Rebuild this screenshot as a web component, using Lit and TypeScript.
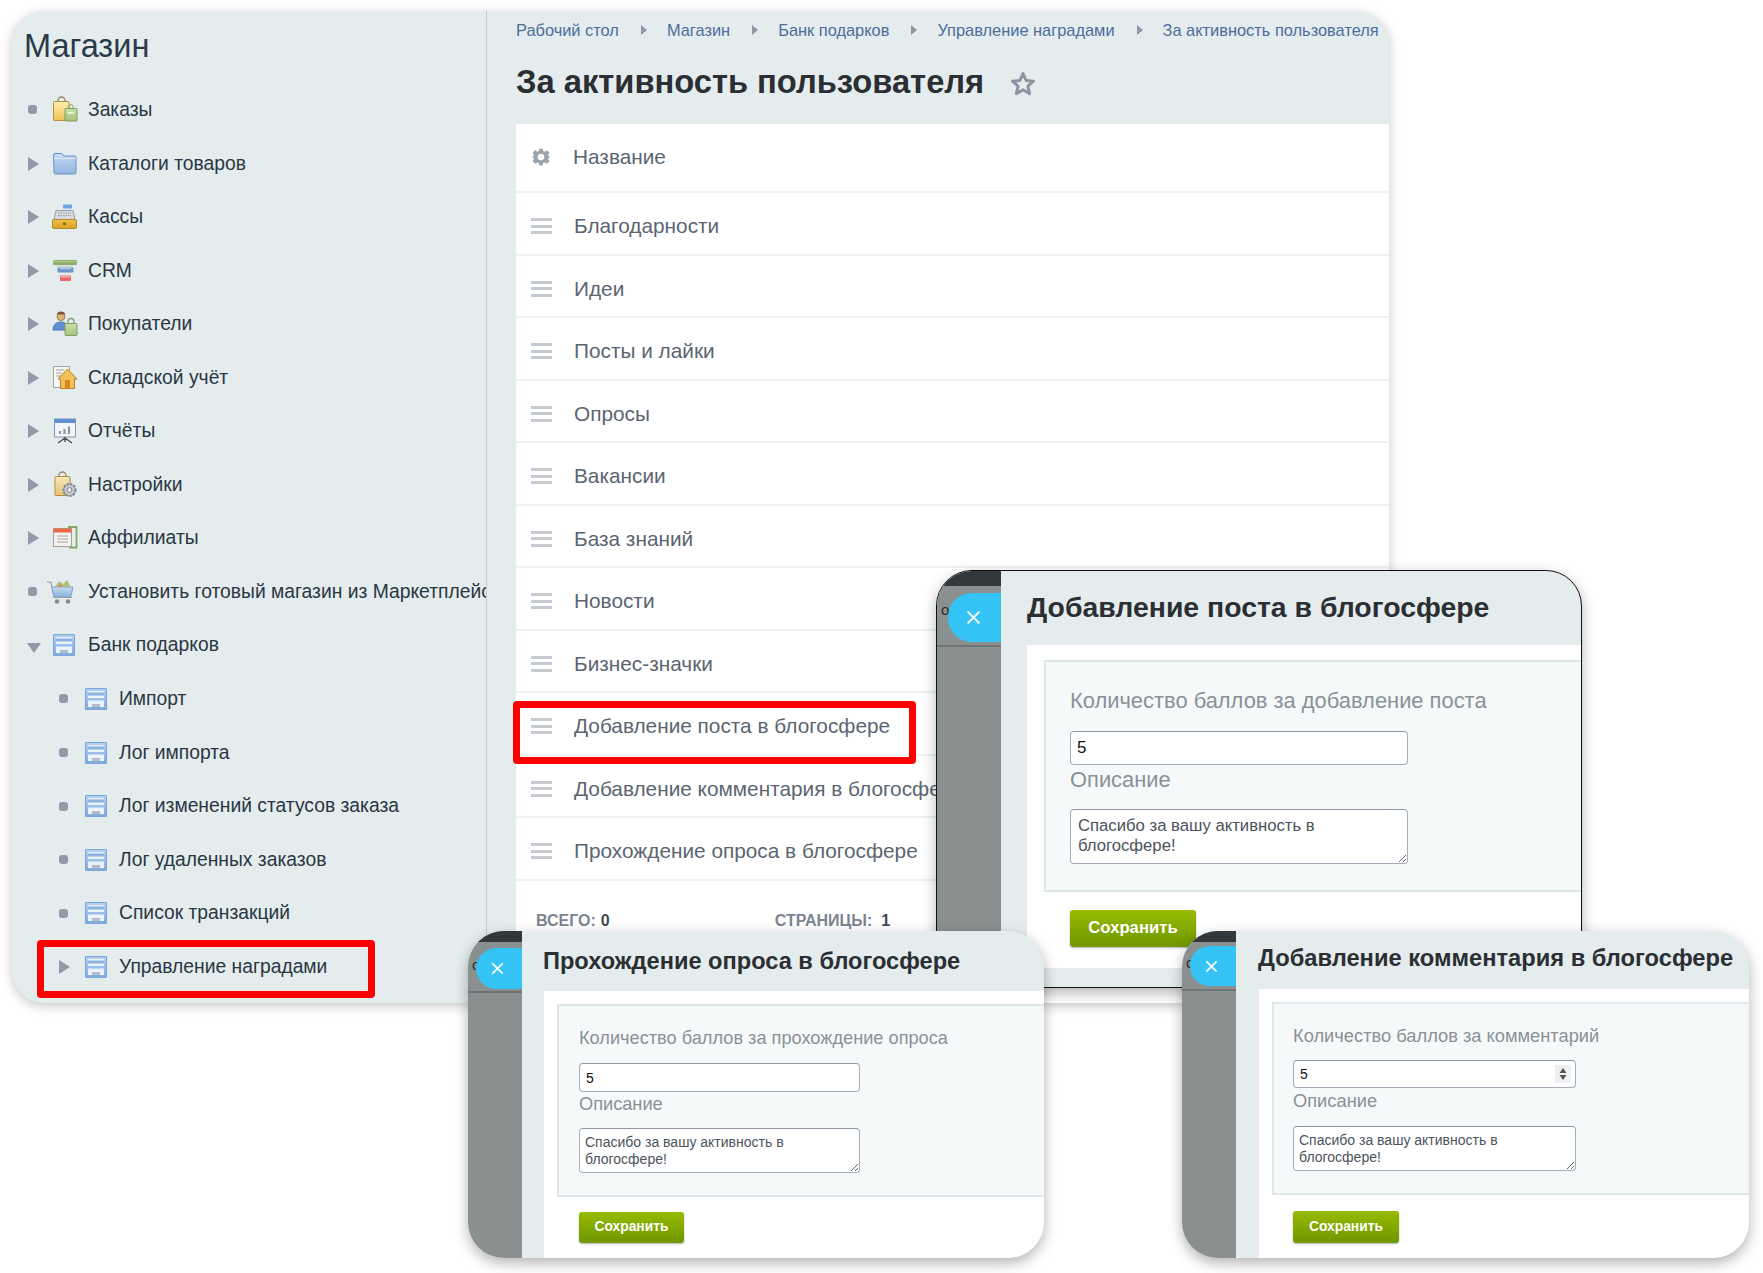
import { LitElement, html, css } from "lit";
import { customElement } from "lit/decorators.js";

const icons: Record<string, any> = {
  orders: html`<svg class="ico" viewBox="0 0 26 26"><path d="M6 5V3.500a3.500 3.500 0 0 1 7 0V5" fill="none" stroke="#9a8a6a" stroke-width="1.300"/><rect x="1.500" y="4.500" width="15.500" height="19" rx="1" fill="url(#gy)" stroke="#b58d3c"/><rect x="13" y="11.500" width="12" height="12.500" rx="1" fill="url(#gg)" stroke="#7f9c5a"/><rect x="16" y="15" width="6" height="1.600" fill="#f3f7e6"/><path d="M17 11V9.500a2 2 0 0 1 4 0V11" fill="none" stroke="#8da66c"/></svg>`,
  folder: html`<svg class="ico" viewBox="0 0 26 26"><path d="M1.500 4a1.500 1.500 0 0 1 1.500-1.500h7l2 2.500h10.500a1.500 1.500 0 0 1 1.500 1.500v15a1.500 1.500 0 0 1-1.500 1.500h-19a1.500 1.500 0 0 1-1.500-1.500z" fill="url(#gb)" stroke="#6c90c4"/><path d="M2 7.500h21.500" stroke="#dce9f7" stroke-width="1.200"/></svg>`,
  cash: html`<svg class="ico" viewBox="0 0 26 26"><rect x="11" y="0.500" width="9" height="4" rx="1" fill="#6aa6e0"/><path d="M4 6.500h17l2 9.500H2z" fill="#d9dcdf" stroke="#9a9ea3"/><path d="M6 9h13M6 11.500h13" stroke="#9ba0a6" stroke-dasharray="1.500 1"/><rect x="0.500" y="15.500" width="24" height="9" rx="1.500" fill="url(#gd)" stroke="#b08a2c"/><rect x="11" y="18.500" width="3" height="2.500" fill="#8a6a1c"/></svg>`,
  crm: html`<svg class="ico" viewBox="0 0 26 26"><rect x="1" y="2" width="24" height="5" rx="1" fill="#8fae6a"/><path d="M1 3.500h24" stroke="#adc78c"/><rect x="5.500" y="9.500" width="16" height="5" rx="1" fill="#6f94cc"/><rect x="8" y="10" width="11" height="1.500" fill="#a6c2e6"/><rect x="8" y="17.500" width="11" height="5.500" rx="1" fill="#e76a6e"/><rect x="9" y="18" width="9" height="1.500" fill="#f4a5a5"/><path d="M4 7.500h18l-2 2H6z" fill="#cfd5d8"/></svg>`,
  buyers: html`<svg class="ico" viewBox="0 0 26 26"><circle cx="9" cy="5.500" r="4" fill="#e0b37c" stroke="#9c7a4f"/><path d="M5 3.500a4 3 0 0 1 8 0z" fill="#7a5a38"/><path d="M1 19c0-5 3-8 8-8s6 3 6 8z" fill="#5f8fd0" stroke="#4c76b3"/><rect x="13" y="12.500" width="12" height="12" rx="1" fill="url(#gg)" stroke="#7f9c5a"/><path d="M16 12.500V10.500a3 3 0 0 1 6 0v2" fill="none" stroke="#8a9a76" stroke-width="1.300"/></svg>`,
  stock: html`<svg class="ico" viewBox="0 0 26 26"><rect x="1.500" y="1.500" width="16" height="21" fill="#f6f6f2" stroke="#a5a5a0"/><path d="M4 5h8M4 8h6M4 11h5" stroke="#a0a0a0"/><path d="M6 14L15.500 4 25 14h-2.500v9.500h-14V14z" fill="#f2c05a" stroke="#b9801f"/><rect x="13" y="15" width="5" height="8.500" fill="#d8861c"/></svg>`,
  report: html`<svg class="ico" viewBox="0 0 26 26"><rect x="2.500" y="1" width="21" height="18" fill="#f3f5f8" stroke="#7e98be"/><rect x="2.500" y="1" width="21" height="4" fill="#5f8ed2"/><path d="M8 16v-3M12.500 16v-5M17 16V8.500" stroke="#8e9aa6" stroke-width="2.200"/><path d="M13 19v5M13 20L6 25M13 20l7 5" stroke="#4a4f55" stroke-width="1.400" fill="none"/></svg>`,
  settings: html`<svg class="ico" viewBox="0 0 26 26"><path d="M7 5V3.500a3.500 3.500 0 0 1 7 0V5" fill="none" stroke="#9a8a6a" stroke-width="1.300"/><rect x="3" y="4.500" width="15" height="19" rx="1" fill="url(#gt)" stroke="#b58d3c"/><circle cx="17.500" cy="18" r="6" fill="#c5c9cc" stroke="#80868b" stroke-width="2" stroke-dasharray="2.500 1"/><circle cx="17.500" cy="18" r="2.400" fill="#eef0f1" stroke="#80868b"/></svg>`,
  affil: html`<svg class="ico" viewBox="0 0 26 26"><path d="M16 2h8.500v20.500H17" fill="none" stroke="#86a860" stroke-width="1.800"/><rect x="1.500" y="3.500" width="18" height="18" fill="#f3f2ee" stroke="#a2a29c"/><rect x="1.500" y="3.500" width="18" height="4" fill="#e66a44"/><path d="M5 11h11M5 14h11M5 17h11" stroke="#a5a5a5" stroke-width="1.200"/></svg>`,
  market: html`<svg class="ico" viewBox="0 0 26 26"><path d="M-5 2.500l4 1 3 15h18" fill="none" stroke="#9a9fa4" stroke-width="1.200"/><path d="M0 8h21l-2 9.500H2z" fill="url(#gb)" stroke="#82a8d4"/><path d="M3 8l4-6 4 3 4-4 4 7z" fill="#a8c67f"/><path d="M5 8l3-3 3 3z" fill="#e88767"/><circle cx="5" cy="22.500" r="2.300" fill="#888d91"/><circle cx="16" cy="22.500" r="2.300" fill="#888d91"/></svg>`,
  form: html`<svg class="ico" viewBox="0 0 26 26"><rect x="1.500" y="2.500" width="21" height="21" rx=".5" fill="url(#gf)" stroke="#7ba3d6"/><rect x="4" y="5" width="16" height="16" fill="#e9f2fb"/><rect x="4" y="6.500" width="16" height="3" fill="#8ab2e2"/><rect x="4" y="12" width="16" height="2.500" fill="#9cc0e8"/><rect x="8" y="18" width="8" height="3" fill="#b3bcc6"/></svg>`,
};

const nav = [
  { t: "Заказы", i: "orders", m: "dot" },
  { t: "Каталоги товаров", i: "folder", m: "right" },
  { t: "Кассы", i: "cash", m: "right" },
  { t: "CRM", i: "crm", m: "right" },
  { t: "Покупатели", i: "buyers", m: "right" },
  { t: "Складской учёт", i: "stock", m: "right" },
  { t: "Отчёты", i: "report", m: "right" },
  { t: "Настройки", i: "settings", m: "right" },
  { t: "Аффилиаты", i: "affil", m: "right" },
  { t: "Установить готовый магазин из Маркетплейса", i: "market", m: "dot" },
  { t: "Банк подарков", i: "form", m: "down" },
  { t: "Импорт", i: "form", m: "dot", sub: true },
  { t: "Лог импорта", i: "form", m: "dot", sub: true },
  { t: "Лог изменений статусов заказа", i: "form", m: "dot", sub: true },
  { t: "Лог удаленных заказов", i: "form", m: "dot", sub: true },
  { t: "Список транзакций", i: "form", m: "dot", sub: true },
  { t: "Управление наградами", i: "form", m: "right", sub: true },
];

const rows = [
  "Благодарности", "Идеи", "Посты и лайки", "Опросы", "Вакансии", "База знаний", "Новости", "Бизнес-значки",
  "Добавление поста в блогосфере", "Добавление комментария в блогосфере", "Прохождение опроса в блогосфере",
];

const crumbs = ["Рабочий стол", "Магазин", "Банк подарков", "Управление наградами", "За активность пользователя"];

const modals = [
  { cls: "m1", title: "Добавление поста в блогосфере", label: "Количество баллов за добавление поста", spin: false },
  { cls: "m2", title: "Прохождение опроса в блогосфере", label: "Количество баллов за прохождение опроса", spin: false },
  { cls: "m3", title: "Добавление комментария в блогосфере", label: "Количество баллов за комментарий", spin: true },
];

@customElement("app-root")
export class AppRoot extends LitElement {
  static styles = css`
    :host { display: block; position: relative; width: 1763px; height: 1273px; background: #fff; overflow: hidden; font-family: "Liberation Sans", Arial, sans-serif; }
    .defs { display: block; width: 0; height: 0; }

    .win { position: absolute; left: 12px; top: 11px; width: 1377px; height: 992px; display: flex; background: #e4ecee; border-radius: 32px; overflow: hidden; box-shadow: 0 3px 12px rgba(0,0,0,.22); }
    .side { width: 474px; flex: none; border-right: 1px solid #b9cbdc; overflow: hidden; }
    .side h1 { margin: 0; height: 72.2px; line-height: 70px; padding-left: 12px; font-size: 32.500px; font-weight: 400; color: #2b3a48; }
    .nav { display: grid; grid-auto-rows: 53.550px; }
    .item { display: flex; align-items: center; padding-left: 16px; white-space: nowrap; font-size: 19.300px; color: #2a3743; position: relative; }
    .item.sub { padding-left: 47px; }
    .mark { width: 24px; flex: none; display: flex; align-items: center; }
    .sub .mark { width: 25px; }
    .dot { width: 9px; height: 9px; border-radius: 3px; background: #8f9ba8; }
    .right { width: 0; height: 0; border-left: 11px solid #8f9ba8; border-top: 7px solid transparent; border-bottom: 7px solid transparent; }
    .down { width: 0; height: 0; margin: 6px 0 0 -1px; border-top: 10px solid #8f9ba8; border-left: 7px solid transparent; border-right: 7px solid transparent; }
    .ico { width: 26px; height: 26px; flex: none; overflow: visible; }
    .item > span.label { margin-left: 10px; }
    .sub > span.label { margin-left: 9px; }

    .main { flex: 1; min-width: 0; padding-left: 29px; display: flex; flex-direction: column; }
    .crumbs { height: 38px; display: flex; align-items: center; white-space: nowrap; font-size: 16.400px; color: #4d6d9a; }
    .chev { width: 0; height: 0; margin: 0 20px 0 22px; border-left: 6px solid #8b97a3; border-top: 5px solid transparent; border-bottom: 5px solid transparent; }
    .ttl { height: 75px; padding-bottom: 9px; box-sizing: border-box; display: flex; align-items: center; }
    .ttl h2 { margin: 0; font-size: 32.700px; font-weight: 700; color: #2b2f33; white-space: nowrap; }
    .star { width: 26px; height: 26px; margin: 4px 0 0 26px; }
    .list { background: #fff; flex: 1; }
    .hrow { height: 67px; box-sizing: content-box; display: flex; align-items: flex-start; line-height: 65px; font-size: 20.800px; color: #5b6572; border-bottom: 2px solid #eef2f4; }
    .gear { width: 22px; height: 22px; margin: 22px 21px 0 14px; }
    .row { height: 62.5px; box-sizing: border-box; padding-top: 6px; display: flex; align-items: center; font-size: 20.800px; color: #5b6572; border-bottom: 2px solid #eef2f4; white-space: nowrap; }
    .ham { width: 21px; height: 16px; margin: 0 22px 0 15px; flex: none; display: flex; flex-direction: column; justify-content: space-between; }
    .ham i { display: block; height: 3px; background: #c6cad1; }
    .foot { display: flex; padding: 31px 0 0 20px; font-size: 16px; font-weight: 700; color: #7b8592; }
    .foot b { color: #3f4a56; margin-left: 5px; }
    .foot .pg { margin-left: 165px; }
    .foot .pg b { margin-left: 9px; }

    .red { position: absolute; border: 7px solid #fe0000; border-radius: 4px; box-sizing: border-box; }
    .r1 { left: 37px; top: 940px; width: 338px; height: 58px; }
    .r2 { left: 513px; top: 701px; width: 403px; height: 63px; }

    .modal { position: absolute; display: flex; overflow: hidden; background: #e4ecee; box-sizing: border-box; box-shadow: 0 5px 14px rgba(0,0,0,.3); }
    .m1 { left: 936px; top: 570px; width: 646px; height: 418px; border-radius: 36px; border: 1px solid #111;
      --strip: 64px; --dark: 15px; --line: 74px; --cl: 11px; --ct: 22px; --cw: 53px; --ch: 49px; --x: 17px; --hh: 74px; --hb: 2px; --tp: 26px; --tf: 28.400px;
      --wm: 26px; --wb: 19px; --wt: 15px; --wp: 17px; --ip: 26px; --ft: 23px; --lf: 21.900px; --ll: 32px; --gi: 14px; --iw: 338px; --ih: 34px; --ol: 30px; --gt: 14px; --th: 55px; --fh: 232px; --bt: 18px; --bw: 126px; --bh: 37px; --bf: 16.700px; --vf: 17px; --tpf: 16.700px; --tlh: 19.500px; --tpt: 6px; --tpl: 7px; }
    .m2 { left: 468px; top: 931px; width: 576px; height: 327px; border-radius: 36px;
      --strip: 54px; --dark: 11px; --line: 60px; --cl: 8px; --ct: 17px; --cw: 46px; --ch: 41px; --x: 15px; --hh: 60px; --hb: 0px; --tp: 21px; --tf: 23.600px;
      --wm: 22px; --wb: 0px; --wt: 13px; --wp: 13px; --ip: 22px; --ft: 18px; --lf: 18.200px; --ll: 28px; --gi: 11px; --iw: 281px; --ih: 29px; --ol: 24px; --gt: 12px; --th: 45px; --fh: 193px; --bt: 15px; --bw: 105px; --bh: 31px; --bf: 13.800px; --vf: 14px; --tpf: 14px; --tlh: 16.500px; --tpt: 5px; --tpl: 5px; }
    .m3 { left: 1182px; top: 931px; width: 567px; height: 327px; border-radius: 36px;
      --strip: 54px; --dark: 11px; --line: 58px; --cl: 8px; --ct: 15px; --cw: 46px; --ch: 40px; --x: 15px; --hh: 58px; --hb: 4px; --tp: 22px; --tf: 23.700px;
      --wm: 23px; --wb: 0px; --wt: 13px; --wp: 13px; --ip: 21px; --ft: 18px; --lf: 18.300px; --ll: 28px; --gi: 10px; --iw: 283px; --ih: 28px; --ol: 25px; --gt: 13px; --th: 45px; --fh: 193px; --bt: 16px; --bw: 106px; --bh: 32px; --bf: 13.800px; --vf: 14px; --tpf: 14px; --tlh: 16.500px; --tpt: 5px; --tpl: 5px; }
    .strip { width: var(--strip); flex: none; position: relative; background: #8a8f8f; }
    .strip .top { height: var(--dark); background: #33383d; }
    .strip .ln { position: absolute; left: 0; right: 0; top: var(--line); height: 2px; background: #6f7474; }
    .strip .oo { position: absolute; left: 4px; top: calc(var(--ct) + 8px); font-size: 15px; color: #2c3034; }
    .close { position: absolute; left: var(--cl); top: var(--ct); width: var(--cw); height: var(--ch); background: #33c4f5; border-radius: 24px 0 0 24px; display: flex; align-items: center; justify-content: center; padding-right: 3px; box-sizing: border-box; }
    .close svg { width: var(--x); height: var(--x); }
    .pane { flex: 1; min-width: 0; display: flex; flex-direction: column; }
    .head { height: var(--hh); padding: 0 0 var(--hb) var(--tp); flex: none; display: flex; align-items: center; box-sizing: border-box; }
    .head h3 { margin: 0; font-size: var(--tf); font-weight: 700; color: #2b2f33; white-space: nowrap; }
    .white { flex: 1; margin: 0 0 var(--wb) var(--wm); padding: var(--wt) 0 0 var(--wp); background: #fff; }
    .fs { height: var(--fh); box-sizing: border-box; background: #f5f9fa; border: 2px solid #e0e7ea; border-right: none; padding: var(--ft) 0 0 calc(var(--ip) - 2px); display: flex; flex-direction: column; align-items: flex-start; }
    .fs label { font-size: var(--lf); line-height: var(--ll); color: #8a9197; white-space: nowrap; }
    .fs label.o2 { line-height: var(--ol); }
    .inp { position: relative; margin-top: var(--gi); }
    .inp input { display: block; width: var(--iw); height: var(--ih); box-sizing: border-box; border: 1px solid #a4adb8; border-top-color: #8f98a3; border-radius: 4px; background: #fff; padding: 0 6px; font: var(--vf) "Liberation Sans", sans-serif; color: #111; outline: none; }
    .spin { position: absolute; right: 5px; top: 50%; transform: translateY(-50%); width: 16px; height: 18px; background: #eff0f1; }
    .spin svg { display: block; width: 16px; height: 18px; }
    .fs textarea { display: block; margin-top: var(--gt); width: var(--iw); height: var(--th); box-sizing: border-box; border: 1px solid #a4adb8; border-top-color: #8f98a3; border-radius: 4px; background: #fff; padding: var(--tpt) 6px 0 var(--tpl); font: var(--tpf)/var(--tlh) "Liberation Sans", sans-serif; color: #4b535c; outline: none; overflow: hidden; }
    .save { display: flex; align-items: center; justify-content: center; margin: var(--bt) 0 0 var(--ip); width: var(--bw); height: var(--bh); border: none; border-radius: 3px; padding: 0 0 2px; background: linear-gradient(#97bb00, #6e9600); box-shadow: 0 1px 2px rgba(0,0,0,.3); font: 700 var(--bf) "Liberation Sans", sans-serif; color: #fff; }
  `;

  render() {
    return html`
      <svg class="defs">
        <defs>
          <linearGradient id="gy" x1="0" y1="0" x2="0" y2="1"><stop offset="0" stop-color="#fdf0b0"/><stop offset="1" stop-color="#eec254"/></linearGradient>
          <linearGradient id="gt" x1="0" y1="0" x2="0" y2="1"><stop offset="0" stop-color="#f8e6bb"/><stop offset="1" stop-color="#e8c27e"/></linearGradient>
          <linearGradient id="gg" x1="0" y1="0" x2="0" y2="1"><stop offset="0" stop-color="#cde0ad"/><stop offset="1" stop-color="#a4c27a"/></linearGradient>
          <linearGradient id="gb" x1="0" y1="0" x2="0" y2="1"><stop offset="0" stop-color="#c6dcf3"/><stop offset="1" stop-color="#8eb4e0"/></linearGradient>
          <linearGradient id="gd" x1="0" y1="0" x2="0" y2="1"><stop offset="0" stop-color="#f0c24a"/><stop offset="1" stop-color="#d9a020"/></linearGradient>
          <linearGradient id="gf" x1="0" y1="0" x2="0" y2="1"><stop offset="0" stop-color="#b4d1f1"/><stop offset="1" stop-color="#80aade"/></linearGradient>
        </defs>
      </svg>
      <section class="win">
        <aside class="side">
          <h1>Магазин</h1>
          <nav class="nav">
            ${nav.map((n) => html`
              <div class="item ${n.sub ? "sub" : ""}">
                <span class="mark"><i class="${n.m}"></i></span>
                ${icons[n.i]}
                <span class="label">${n.t}</span>
              </div>`)}
          </nav>
        </aside>
        <main class="main">
          <div class="crumbs">
            ${crumbs.map((c, i) => html`${i ? html`<i class="chev"></i>` : ""}<span>${c}</span>`)}
          </div>
          <div class="ttl">
            <h2>За активность пользователя</h2>
            <svg class="star" viewBox="0 0 26 26"><path d="M13 2.500l3.100 7 7.400.7-5.600 5 1.700 7.500L13 18.800l-6.600 3.900 1.700-7.500-5.600-5 7.400-.7z" fill="none" stroke="#8b959f" stroke-width="3" stroke-linejoin="round"/></svg>
          </div>
          <div class="list">
            <div class="hrow">
              <svg class="gear" viewBox="0 0 22 22"><path d="M9 1h4l.6 2.800 1.800.8L18 3l3 3-1.600 2.600.8 1.800L23 11l-2.800.6-.8 1.800L21 16l-3 3-2.600-1.600-1.800.8L13 21H9l-.6-2.800-1.800-.8L4 19l-3-3 1.600-2.600-.8-1.800L-1 11l2.800-.6.8-1.800L1 6l3-3 2.600 1.600 1.800-.8z" fill="#9aa4ac" transform="translate(1.800 1.800) scale(.84)"/><circle cx="11" cy="11" r="3.300" fill="#fff"/></svg>
              <span>Название</span>
            </div>
            ${rows.map((r) => html`<div class="row"><span class="ham"><i></i><i></i><i></i></span><span>${r}</span></div>`)}
            <div class="foot">
              <span>ВСЕГО:<b>0</b></span>
              <span class="pg">СТРАНИЦЫ:<b>1</b></span>
            </div>
          </div>
        </main>
      </section>
      <div class="red r1"></div>
      <div class="red r2"></div>
      ${modals.map((m) => html`
        <section class="modal ${m.cls}">
          <div class="strip">
            <div class="top"></div>
            <div class="ln"></div>
            <span class="oo">o</span>
            <div class="close"><svg viewBox="0 0 16 16"><path d="M2.500 2.500l11 11M13.500 2.500l-11 11" stroke="#fff" stroke-width="1.800"/></svg></div>
          </div>
          <div class="pane">
            <div class="head"><h3>${m.title}</h3></div>
            <div class="white">
              <div class="fs">
                <label>${m.label}</label>
                <div class="inp">
                  <input .value=${"5"} />
                  ${m.spin ? html`<span class="spin"><svg viewBox="0 0 16 18"><path d="M8 3l3.500 5h-7zM8 15l3.500-5h-7z" fill="#555"/></svg></span>` : ""}
                </div>
                <label class="o2">Описание</label>
                <textarea .value=${"Спасибо за вашу активность в\nблогосфере!"}></textarea>
              </div>
              <button class="save">Сохранить</button>
            </div>
          </div>
        </section>`)}
    `;
  }
}
